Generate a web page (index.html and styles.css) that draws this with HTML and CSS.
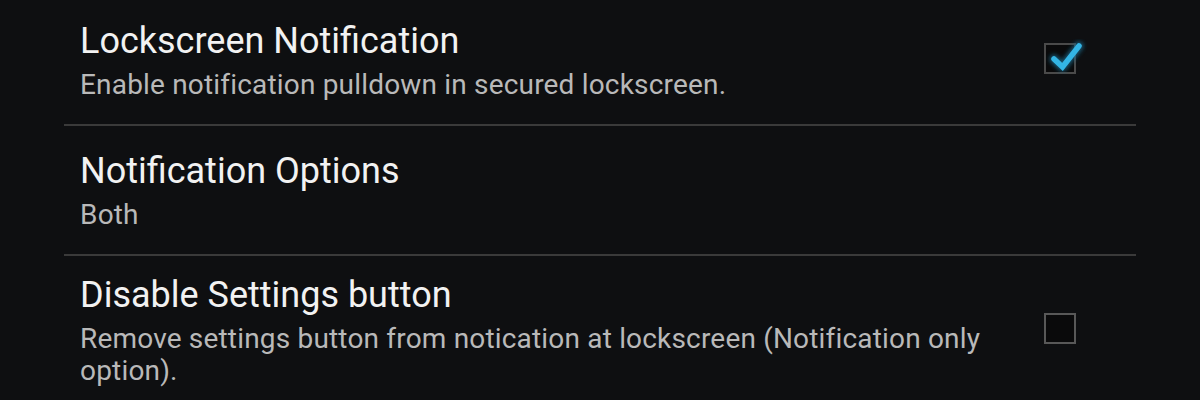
FILE: index.html
```html
<!DOCTYPE html>
<html>
<head>
<meta charset="utf-8">
<link rel="stylesheet" href="styles.css">
</head>
<body>
<div class="list">
  <div class="row">
    <div class="text">
      <div class="title">Lockscreen Notification</div>
      <div class="summary">Enable notification pulldown in secured lockscreen.</div>
    </div>
    <div class="widget">
      <div class="checkbox checked">
        <svg class="check" width="48" height="40" viewBox="0 0 48 40">
          <defs>
            <filter id="glow" x="-30%" y="-30%" width="160%" height="160%">
              <feGaussianBlur stdDeviation="2"/>
            </filter>
          </defs>
          <path d="M10 17 L18.5 25 L35 4" fill="none" stroke="#1a6a8c" stroke-width="9" stroke-linecap="round" stroke-linejoin="round" filter="url(#glow)" opacity="0.8"/>
          <path d="M10 17 L18.5 25 L35 4" fill="none" stroke="#33b5e5" stroke-width="5.5" stroke-linecap="round" stroke-linejoin="miter"/>
        </svg>
      </div>
    </div>
  </div>
  <div class="row">
    <div class="text">
      <div class="title">Notification Options</div>
      <div class="summary">Both</div>
    </div>
  </div>
  <div class="row">
    <div class="text">
      <div class="title">Disable Settings button</div>
      <div class="summary">Remove settings button from notication at lockscreen (Notification only option).</div>
    </div>
    <div class="widget">
      <div class="checkbox"></div>
    </div>
  </div>
</div>
</body>
</html>
```

FILE: styles.css
```css
html, body {
  margin: 0;
  padding: 0;
  background: #0e0f11;
  overflow: hidden;
}

body {
  font-family: Roboto, "Noto Sans", sans-serif;
  -webkit-font-smoothing: antialiased;
}

.list {
  margin: -4px 64px 0 64px;
}

.row {
  display: flex;
  align-items: stretch;
  min-height: 128px;
  border-bottom: 2px solid #3a3a3a;
}

.row:last-child {
  border-bottom: none;
}

.text {
  flex: 1;
  display: flex;
  flex-direction: column;
  justify-content: center;
  padding: 19px 0 17px 16px;
  max-width: 930px;
}

.title {
  font-size: 36px;
  line-height: 40px;
  color: #f2f2f2;
}

.summary {
  margin-top: 8px;
  font-size: 28px;
  line-height: 32px;
  letter-spacing: 0.18px;
  color: #b9b9b9;
}

.widget {
  margin-left: auto;
  display: flex;
  align-items: center;
  padding-right: 60px;
}

.checkbox {
  position: relative;
  width: 32px;
  height: 31px;
  box-sizing: border-box;
  border: 2px solid #585858;
  margin-bottom: 3px;
  background: #0a0a0b;
}

.checkbox.checked {
  border-color: #4a4a4a;
}

.check {
  position: absolute;
  left: -2px;
  top: -3px;
  overflow: visible;
}
```
